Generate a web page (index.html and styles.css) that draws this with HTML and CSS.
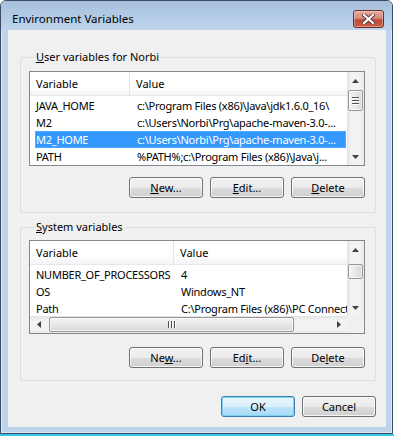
FILE: index.html
```html
<!DOCTYPE html>
<html lang="en">
<head>
    <meta charset="UTF-8">
    <title>Environment Variables</title>
    <link rel="stylesheet" href="styles.css">
</head>
<body>

    <!-- Dialog window -->
    <div class="window">
        <div class="titlebar">
            <span class="title">Environment Variables</span>
            <button class="close-btn" title="Close">
                <svg width="13" height="10" viewBox="0 0 13 10">
                    <path d="M2 1 L11 9 M11 1 L2 9" stroke="#5a3a36" stroke-width="4" stroke-linecap="square"/>
                    <path d="M2 1 L11 9 M11 1 L2 9" stroke="#ffffff" stroke-width="2.2" stroke-linecap="square"/>
                </svg>
            </button>
        </div>

        <div class="client">

            <!-- User variables -->
            <div class="group user-group">
                <span class="group-title"><u>U</u>ser variables for Norbi</span>
                <div class="list user-list">
                    <div class="list-main">
                        <div class="list-header">
                            <span class="col-var">Variable</span>
                            <span class="col-val">Value</span>
                        </div>
                        <div class="row"><span class="col-var">JAVA_HOME</span><span class="col-val">c:\Program Files (x86)\Java\jdk1.6.0_16\</span></div>
                        <div class="row"><span class="col-var">M2</span><span class="col-val">c:\Users\Norbi\Prg\apache-maven-3.0-...</span></div>
                        <div class="row selected"><span class="col-var">M2_HOME</span><span class="col-val">c:\Users\Norbi\Prg\apache-maven-3.0-...</span></div>
                        <div class="row"><span class="col-var">PATH</span><span class="col-val">%PATH%;c:\Program Files (x86)\Java\j...</span></div>
                    </div>
                    <div class="vscroll">
                        <div class="arrow-btn">
                            <svg width="7" height="4" viewBox="0 0 7 4"><path d="M0 4 L3.5 0 L7 4 Z" fill="#404040"/></svg>
                        </div>
                        <div class="vthumb user-thumb"><span class="grip"></span><span class="grip"></span><span class="grip"></span></div>
                        <div class="track-fill"></div>
                        <div class="arrow-btn">
                            <svg width="7" height="4" viewBox="0 0 7 4"><path d="M0 0 L3.5 4 L7 0 Z" fill="#404040"/></svg>
                        </div>
                    </div>
                </div>
                <div class="buttons">
                    <button class="btn"><u>N</u>ew...</button>
                    <button class="btn"><u>E</u>dit...</button>
                    <button class="btn"><u>D</u>elete</button>
                </div>
            </div>

            <!-- System variables -->
            <div class="group system-group">
                <span class="group-title"><u>S</u>ystem variables</span>
                <div class="list system-list">
                    <div class="list-main">
                        <div class="list-header">
                            <span class="col-var">Variable</span>
                            <span class="col-val">Value</span>
                        </div>
                        <div class="row"><span class="col-var">NUMBER_OF_PROCESSORS</span><span class="col-val">4</span></div>
                        <div class="row"><span class="col-var">OS</span><span class="col-val">Windows_NT</span></div>
                        <div class="row"><span class="col-var">Path</span><span class="col-val">C:\Program Files (x86)\PC Connectivity Solution\</span></div>
                    </div>
                    <div class="vscroll">
                        <div class="arrow-btn">
                            <svg width="7" height="4" viewBox="0 0 7 4"><path d="M0 4 L3.5 0 L7 4 Z" fill="#404040"/></svg>
                        </div>
                        <div class="vthumb system-thumb"></div>
                        <div class="track-fill"></div>
                        <div class="arrow-btn">
                            <svg width="7" height="4" viewBox="0 0 7 4"><path d="M0 0 L3.5 4 L7 0 Z" fill="#404040"/></svg>
                        </div>
                    </div>
                    <div class="hscroll">
                        <div class="arrow-btn">
                            <svg width="4" height="7" viewBox="0 0 4 7"><path d="M4 0 L0 3.5 L4 7 Z" fill="#404040"/></svg>
                        </div>
                        <div class="hthumb"><span class="grip"></span><span class="grip"></span><span class="grip"></span></div>
                        <div class="track-fill"></div>
                        <div class="arrow-btn">
                            <svg width="4" height="7" viewBox="0 0 4 7"><path d="M0 0 L4 3.5 L0 7 Z" fill="#404040"/></svg>
                        </div>
                    </div>
                    <div class="corner"></div>
                </div>
                <div class="buttons">
                    <button class="btn">Ne<u>w</u>...</button>
                    <button class="btn">Ed<u>i</u>t...</button>
                    <button class="btn">De<u>l</u>ete</button>
                </div>
            </div>

            <!-- Dialog buttons -->
            <div class="footer">
                <button class="btn default-btn">OK</button>
                <button class="btn">Cancel</button>
            </div>

        </div>
    </div>

</body>
</html>
```

FILE: styles.css
```css
body {
    margin: 0;
    height: 436px;
    font-family: "Noto Sans", sans-serif;
    font-size: 11px;
    color: #000;
    background: linear-gradient(to bottom, #ffffff 434px, #37c6e4 434px);
}

/* Window frame */
.window {
    width: 391px;
    height: 432px;
    border: 1px solid #3b4d62;
    border-radius: 6px 6px 0 0;
    background-color: #bdd4ec;
    box-shadow: inset 0 0 0 1px rgba(255, 255, 255, 0.45);
    display: flex;
    flex-direction: column;
}

.titlebar {
    height: 29px;
    flex: none;
    display: flex;
    justify-content: space-between;
    align-items: flex-start;
    padding: 9px 8px 0 11px;
    box-sizing: border-box;
    border-radius: 5px 5px 0 0;
    background: linear-gradient(to bottom, #a6c0dd, #bed5ec);
}

.title {
    line-height: 17px;
    font-size: 11.5px;
    color: #000;
}

.close-btn {
    width: 31px;
    height: 18px;
    padding: 0;
    border: 1px solid #6b2c24;
    border-radius: 3px;
    background: linear-gradient(to bottom, #e6a89c 0%, #d58a7c 45%, #c2473a 55%, #c95c46 100%);
    box-shadow: inset 0 0 0 1px rgba(255, 255, 255, 0.35);
    display: flex;
    justify-content: center;
    align-items: center;
}

/* Client area */
.client {
    flex: 1;
    margin: 0 6px 6px 7px;
    background-color: #f0f0f0;
    padding: 27px 0 0 12px;
    display: flex;
    flex-direction: column;
}

.group {
    width: 356px;
    box-sizing: border-box;
    border: 1px solid #d5dfe5;
    border-radius: 3px;
    padding: 0 10px 0 8px;
    display: flex;
    flex-direction: column;
}

.user-group {
    height: 156px;
}

.system-group {
    height: 154px;
    margin-top: 14px;
}

.group-title {
    align-self: flex-start;
    line-height: 14px;
    margin: -8px 0 0 5px;
    padding: 0 2px;
    background-color: #f0f0f0;
}

/* List views */
.list {
    border: 1px solid #828790;
    background-color: #fff;
    display: grid;
    grid-template-columns: 1fr 17px;
    overflow: hidden;
}

.user-list {
    margin-top: 7px;
    height: 95px;
    box-sizing: border-box;
}

.system-list {
    margin-top: 6px;
    height: 94px;
    box-sizing: border-box;
    grid-template-rows: 1fr 17px;
}

.list-main {
    overflow: hidden;
    min-width: 0;
}

.list-header {
    height: 24px;
    margin-bottom: 1px;
    display: flex;
    align-items: center;
    background: linear-gradient(to bottom, #ffffff 0%, #ffffff 60%, #f3f4f6 100%);
    border-bottom: 1px solid #e5e8ec;
    box-sizing: border-box;
    white-space: nowrap;
}

.list-header .col-var {
    height: 100%;
    display: flex;
    align-items: center;
    padding-left: 6px;
    border-right: 1px solid #e3e5e8;
    box-sizing: border-box;
}

.list-header .col-val {
    padding-left: 6px;
}

.user-list .list-header .col-var {
    width: 100px;
}

.system-list .list-header .col-var {
    width: 144px;
}

.row {
    height: 17px;
    line-height: 17px;
    margin: 0 1px 0 5px;
    display: flex;
    white-space: nowrap;
    letter-spacing: -0.25px;
    box-sizing: border-box;
}

.row .col-var {
    padding-left: 1px;
    flex: none;
}

.user-list .row .col-var {
    width: 95px;
}

.system-list .row .col-var {
    width: 139px;
}

.row .col-val {
    padding-left: 6px;
}

.row.selected {
    background-color: #3399ff;
    color: #fff;
    outline: 1px dotted #d9a05a;
    outline-offset: -1px;
}

/* Scroll bars */
.vscroll {
    display: flex;
    flex-direction: column;
    background: linear-gradient(to right, #e2e3e5, #f3f3f3 25%, #f3f3f3 75%, #e9eaeb);
}

.system-list .vscroll {
    grid-row: 1;
    grid-column: 2;
}

.hscroll {
    display: flex;
    background: linear-gradient(to bottom, #e2e3e5, #f3f3f3 25%, #f3f3f3 75%, #e9eaeb);
}

.arrow-btn {
    width: 17px;
    height: 17px;
    flex: none;
    display: flex;
    justify-content: center;
    align-items: center;
}

.track-fill {
    flex: 1;
}

.vthumb {
    width: 15px;
    height: 21px;
    margin: 1px 0 0 1px;
    box-sizing: border-box;
    border: 1px solid #979797;
    border-radius: 2px;
    background: linear-gradient(to right, #f3f3f3, #e8e8e8 50%, #d6d6d6);
    box-shadow: inset 0 0 0 1px rgba(255, 255, 255, 0.7);
    display: flex;
    flex-direction: column;
    justify-content: center;
    align-items: center;
    gap: 1px;
}

.system-thumb {
    height: 15px;
    margin-top: 6px;
}

.vthumb .grip {
    width: 7px;
    height: 1px;
    background-color: #545454;
    box-shadow: 0 1px 0 #ffffff;
    margin-bottom: 1px;
}

.hthumb {
    width: 245px;
    height: 15px;
    margin: 1px 0 0 2px;
    box-sizing: border-box;
    border: 1px solid #979797;
    border-radius: 2px;
    background: linear-gradient(to bottom, #f3f3f3, #e8e8e8 50%, #d6d6d6);
    box-shadow: inset 0 0 0 1px rgba(255, 255, 255, 0.7);
    display: flex;
    justify-content: center;
    align-items: center;
    gap: 1px;
}

.hthumb .grip {
    width: 1px;
    height: 7px;
    background-color: #545454;
    box-shadow: 1px 0 0 #ffffff;
    margin-right: 1px;
}

.corner {
    background-color: #f0f0f0;
}

/* Buttons */
.buttons {
    display: flex;
    justify-content: flex-end;
    gap: 7px;
}

.user-group .buttons {
    margin-top: 11px;
}

.system-group .buttons {
    margin-top: 13px;
}

.footer {
    width: 356px;
    margin-top: 15px;
    display: flex;
    justify-content: flex-end;
    gap: 7px;
}

.btn {
    width: 74px;
    height: 21px;
    padding: 0;
    font-family: "Noto Sans", sans-serif;
    font-size: 11px;
    color: #000;
    border: 1px solid #707070;
    border-radius: 3px;
    background: linear-gradient(to bottom, #f2f2f2 0%, #ebebeb 50%, #dddddd 51%, #cfcfcf 100%);
    box-shadow: inset 0 0 0 1px rgba(255, 255, 255, 0.8);
}

.default-btn {
    border-color: #3c7fb1;
    background: linear-gradient(to bottom, #eaf6fd 0%, #d9f0fc 50%, #bee6fd 51%, #a7d9f5 100%);
    box-shadow: inset 0 0 0 1px #7ed3f2;
}
```
